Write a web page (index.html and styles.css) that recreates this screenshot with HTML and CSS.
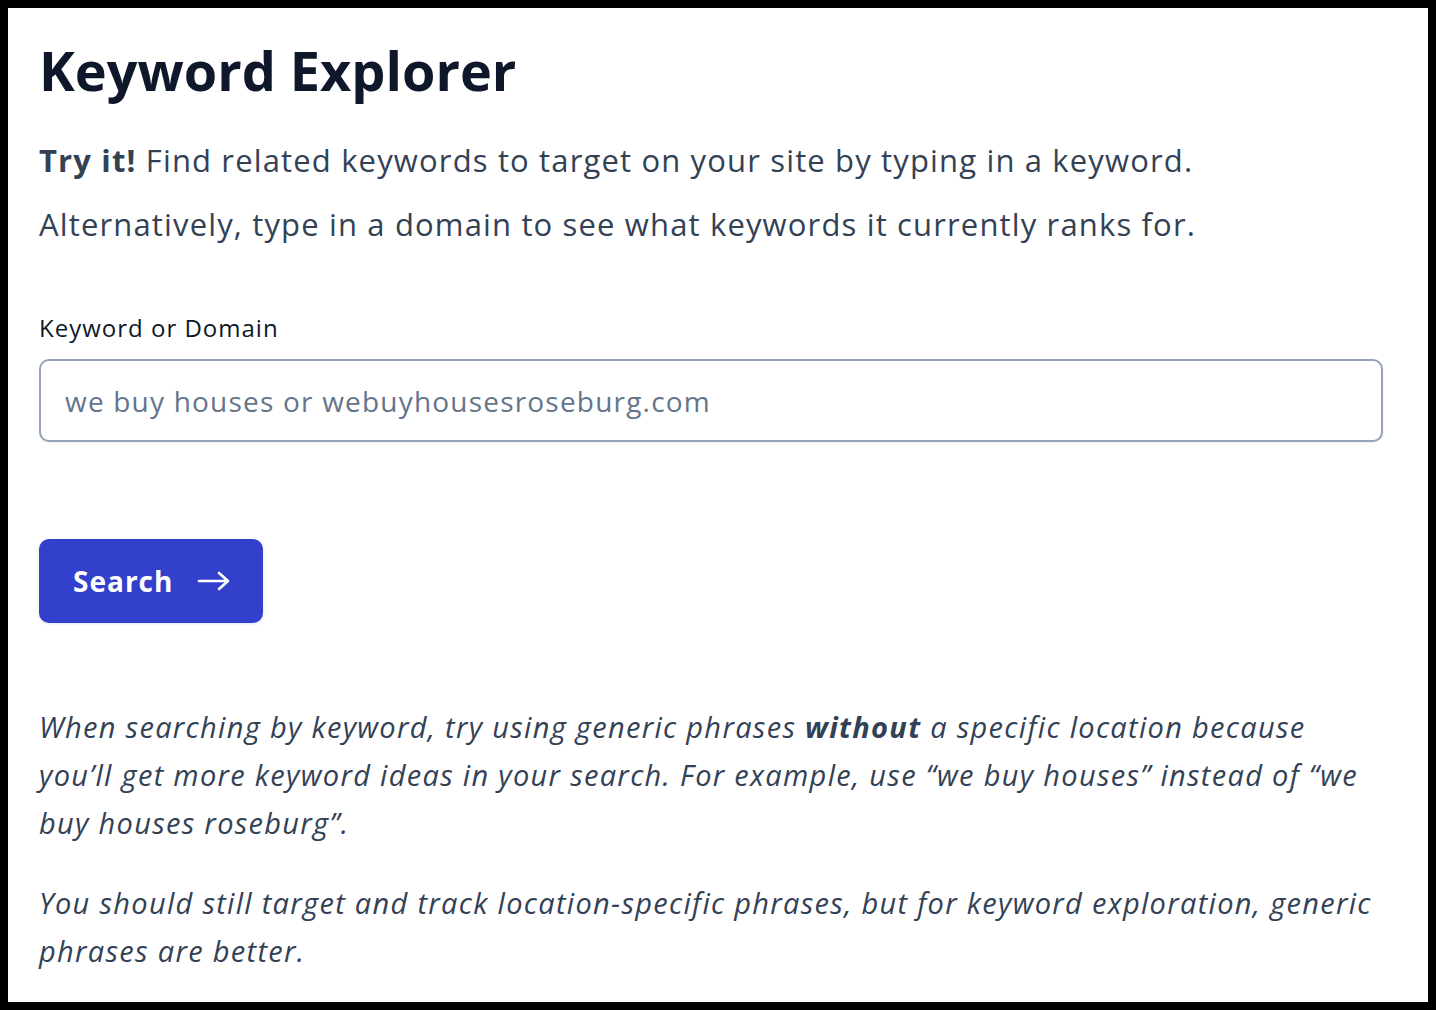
FILE: index.html
```html
<!DOCTYPE html>
<html lang="en">
<head>
    <meta charset="UTF-8">
    <meta name="viewport" content="width=device-width, initial-scale=1.0">
    <title>Keyword Explorer</title>
    <link rel="stylesheet" href="styles.css">
</head>
<body>
    <div class="panel">
        <h1>Keyword Explorer</h1>
        <p class="intro"><strong>Try it!</strong> Find related keywords to target on your site by typing in a keyword.</p>
        <p class="intro">Alternatively, type in a domain to see what keywords it currently ranks for.</p>

        <form class="search-form" onsubmit="return false;">
            <label for="keyword">Keyword or Domain</label>
            <input type="text" id="keyword" placeholder="we buy houses or webuyhousesroseburg.com">
            <button type="submit" class="search-btn">
                Search
                <svg width="34" height="20" viewBox="0 0 34 20" fill="none" stroke="currentColor" stroke-width="2.6" stroke-linecap="round" stroke-linejoin="round">
                    <path d="M2 10h29M22 2l9 8-9 8"/>
                </svg>
            </button>
        </form>

        <div class="tips">
            <p>When searching by keyword, try using generic phrases <strong>without</strong> a specific location because you&rsquo;ll get more keyword ideas in your search. For example, use &ldquo;we buy houses&rdquo; instead of &ldquo;we buy houses roseburg&rdquo;.</p>
            <p>You should still target and track location-specific phrases, but for keyword exploration, generic phrases are better.</p>
        </div>
    </div>
</body>
</html>
```

FILE: styles.css
```css
html, body {
    margin: 0;
    height: 100%;
}
body {
    background: #000;
    padding: 8px;
    box-sizing: border-box;
    font-family: "Open Sans", Lato, sans-serif;
    color: #334155;
}
.panel {
    background: #fff;
    height: 100%;
    box-sizing: border-box;
    padding: 30px 45px 0 31px;
    overflow: hidden;
}
h1 {
    margin: 0 0 34px;
    font-size: 54px;
    line-height: 64px;
    font-weight: 700;
    color: #0f172a;
}
.intro {
    margin: 0 0 16px;
    font-size: 31px;
    line-height: 48px;
    letter-spacing: 1.15px;
}
.intro strong {
    font-weight: 700;
}
.search-form {
    display: flex;
    flex-direction: column;
    align-items: flex-start;
    margin-top: 64px;
}
.search-form label {
    font-size: 24px;
    line-height: 32px;
    letter-spacing: 1px;
    color: #0f172a;
    margin-bottom: 15px;
}
.search-form input {
    width: 100%;
    height: 83px;
    box-sizing: border-box;
    padding: 0 24px;
    border: 2px solid #94a3b8;
    border-radius: 10px;
    font-family: inherit;
    font-size: 28px;
    letter-spacing: 1.2px;
    color: #334155;
    box-shadow: 0 1px 2px rgba(15, 23, 42, 0.08);
}
.search-form input::placeholder {
    color: #64748b;
}
.search-btn {
    margin-top: 97px;
    height: 84px;
    padding: 0 32px 0 34px;
    display: flex;
    align-items: center;
    gap: 24px;
    border: none;
    border-radius: 10px;
    background-color: #3340cc;
    color: #fff;
    font-family: inherit;
    font-size: 28px;
    font-weight: 700;
    letter-spacing: 1px;
    cursor: pointer;
    box-shadow: 0 1px 3px rgba(51, 64, 204, 0.15);
}
.tips {
    margin-top: 80px;
}
.tips p {
    margin: 0 0 32px;
    font-size: 29px;
    line-height: 48px;
    letter-spacing: 1.3px;
    font-style: italic;
}
```
